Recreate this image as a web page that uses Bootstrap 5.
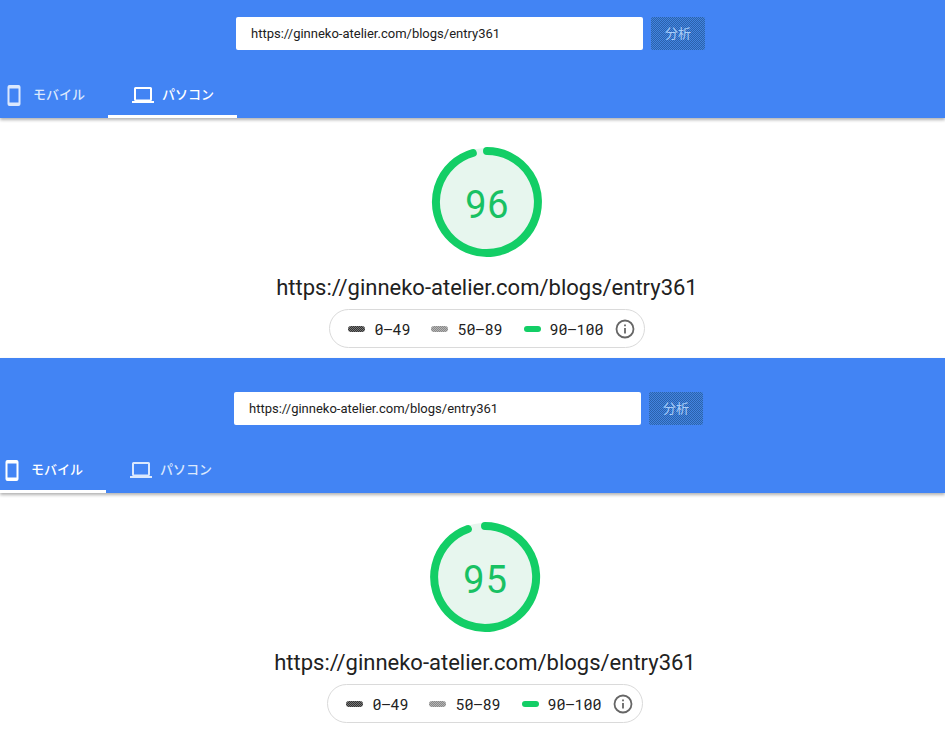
<!DOCTYPE html>
<html lang="ja">
<head>
<meta charset="utf-8">
<meta name="viewport" content="width=device-width, initial-scale=1">
<title>PageSpeed Insights</title>
<link href="https://cdn.jsdelivr.net/npm/bootstrap@5.3.0/dist/css/bootstrap.min.css" rel="stylesheet">
<style>
body{font-family:Roboto,"Noto Sans CJK JP",sans-serif;color:#212121;background:#fff}
.psi-head{background:#4284f4;padding-top:17px;box-shadow:0 2px 3px rgba(0,0,0,.3);position:relative}
.psi-form{padding-right:4px;gap:8px;margin-bottom:20px}
.psi-url{width:407px;height:33px;border:0;border-radius:2px;padding:0 15px;font-size:13px;color:#212121;background:#fff}
.psi-go{width:54px;height:33px;border:0;border-radius:2px;padding:0;font-size:13px;color:#a9cdf8;background:repeating-conic-gradient(#2b62ac 0 25%,#4284e0 0 50%) 0 0/2px 2px}
.psi-tab{height:48px;padding:4px 23px 0 24px;font-size:13px;font-weight:500;color:#dbe8fd;background:none;border:0;border-bottom:3px solid transparent;gap:8px}
.psi-tab:first-child{padding-left:7px;gap:12px}
.psi-tab.active{color:#fff;border-color:#fff}
.psi-tab svg{margin-top:1px}
.psi-body{padding:26px 0 10px 29px}
.gauge{width:114px;height:114px}
.gauge circle{fill:#e7f6ee;stroke:none}
.gauge path{fill:none;stroke:#13ce66;stroke-width:8;stroke-linecap:round}
.gauge text{font-family:"Roboto Mono",Roboto,sans-serif;font-size:38px;font-weight:400;fill:#18c163;text-anchor:middle}
.psi-title{font-size:22px;line-height:28px;margin:16px 0 7px;font-weight:400}
.legend-pill{height:39px;border:1px solid #dadada;border-radius:20px;padding:0 9px 0 18px;font-family:"Roboto Mono","DejaVu Sans Mono",monospace;font-size:15px;line-height:20px}
.legend-key{width:17px;height:6px;border-radius:3px;margin-right:9px}
.legend-range{margin-right:21px}
.legend-range:last-of-type{margin-right:11px}
.key-low{background:repeating-conic-gradient(#333 0 25%,#777 0 50%) 0 0/2px 2px}
.key-mid{background:repeating-conic-gradient(#888 0 25%,#b5b5b5 0 50%) 0 0/2px 2px}
.key-high{background:#13ce66}
.second .psi-head{padding-top:34px}
.second .psi-form{padding-right:8px}
.second .psi-tab:first-child{padding-left:5px}
.second .psi-body{padding-left:25px}
</style>
<script defer src="https://cdn.jsdelivr.net/npm/bootstrap@5.3.0/dist/js/bootstrap.bundle.min.js"></script>
</head>
<body>
<section>
<header class="psi-head">
<form class="psi-form d-flex justify-content-center">
<input class="psi-url" type="text" aria-label="URL" value="https://ginneko-atelier.com/blogs/entry361">
<button class="psi-go" type="button">分析</button>
</form>
<div class="d-flex" role="tablist">
<button class="psi-tab d-flex align-items-center" type="button" role="tab" aria-selected="false"><svg width="14" height="21" viewBox="0 0 14 21"><path fill="currentColor" fill-rule="evenodd" d="M2.500 0h9q2 0 2 2v17q0 2-2 2h-9q-2 0-2-2V2q0-2 2-2zM2.500 3.500v14h9v-14z"/></svg>モバイル</button>
<button class="psi-tab d-flex align-items-center active" type="button" role="tab" aria-selected="true"><svg width="22" height="16" viewBox="0 0 22 16"><path fill="currentColor" fill-rule="evenodd" d="M3.500 0h15q1.500 0 1.500 1.500v11q0 1.500-1.500 1.500H22v2H0v-2h3.500Q2 14 2 12.500v-11Q2 0 3.500 0zM4 2v10.500h14V2z"/></svg>パソコン</button>
</div>
</header>
<main class="psi-body d-flex flex-column align-items-center">
<svg class="gauge" viewBox="0 0 114 114" role="img" aria-label="96"><circle cx="57" cy="58" r="54"/><path d="M57 7A51 51 0 1 1 42.800 9"/><text x="57" y="74">96</text></svg>
<h1 class="psi-title">https://ginneko-atelier.com/blogs/entry361</h1>
<div class="legend-pill d-flex align-items-center">
<i class="legend-key key-low"></i><span class="legend-range">0–49</span>
<i class="legend-key key-mid"></i><span class="legend-range">50–89</span>
<i class="legend-key key-high"></i><span class="legend-range">90–100</span>
<svg width="20" height="20" viewBox="0 0 20 20"><circle cx="10" cy="10" r="8.500" fill="none" stroke="#666" stroke-width="1.800"/><path d="M10 9v5.500M10 5.500v1.800" stroke="#666" stroke-width="1.800"/></svg>
</div>
</main>
</section>
<section class="second">
<header class="psi-head">
<form class="psi-form d-flex justify-content-center">
<input class="psi-url" type="text" aria-label="URL" value="https://ginneko-atelier.com/blogs/entry361">
<button class="psi-go" type="button">分析</button>
</form>
<div class="d-flex" role="tablist">
<button class="psi-tab d-flex align-items-center active" type="button" role="tab" aria-selected="true"><svg width="14" height="21" viewBox="0 0 14 21"><path fill="currentColor" fill-rule="evenodd" d="M2.500 0h9q2 0 2 2v17q0 2-2 2h-9q-2 0-2-2V2q0-2 2-2zM2.500 3.500v14h9v-14z"/></svg>モバイル</button>
<button class="psi-tab d-flex align-items-center" type="button" role="tab" aria-selected="false"><svg width="22" height="16" viewBox="0 0 22 16"><path fill="currentColor" fill-rule="evenodd" d="M3.500 0h15q1.500 0 1.500 1.500v11q0 1.500-1.500 1.500H22v2H0v-2h3.500Q2 14 2 12.500v-11Q2 0 3.500 0zM4 2v10.500h14V2z"/></svg>パソコン</button>
</div>
</header>
<main class="psi-body d-flex flex-column align-items-center">
<svg class="gauge" viewBox="0 0 114 114" role="img" aria-label="95"><circle cx="57" cy="58" r="54"/><path d="M57 7A51 51 0 1 1 39.900 10"/><text x="57" y="74">95</text></svg>
<h2 class="psi-title">https://ginneko-atelier.com/blogs/entry361</h2>
<div class="legend-pill d-flex align-items-center">
<i class="legend-key key-low"></i><span class="legend-range">0–49</span>
<i class="legend-key key-mid"></i><span class="legend-range">50–89</span>
<i class="legend-key key-high"></i><span class="legend-range">90–100</span>
<svg width="20" height="20" viewBox="0 0 20 20"><circle cx="10" cy="10" r="8.500" fill="none" stroke="#666" stroke-width="1.800"/><path d="M10 9v5.500M10 5.500v1.800" stroke="#666" stroke-width="1.800"/></svg>
</div>
</main>
</section>
</body>
</html>
